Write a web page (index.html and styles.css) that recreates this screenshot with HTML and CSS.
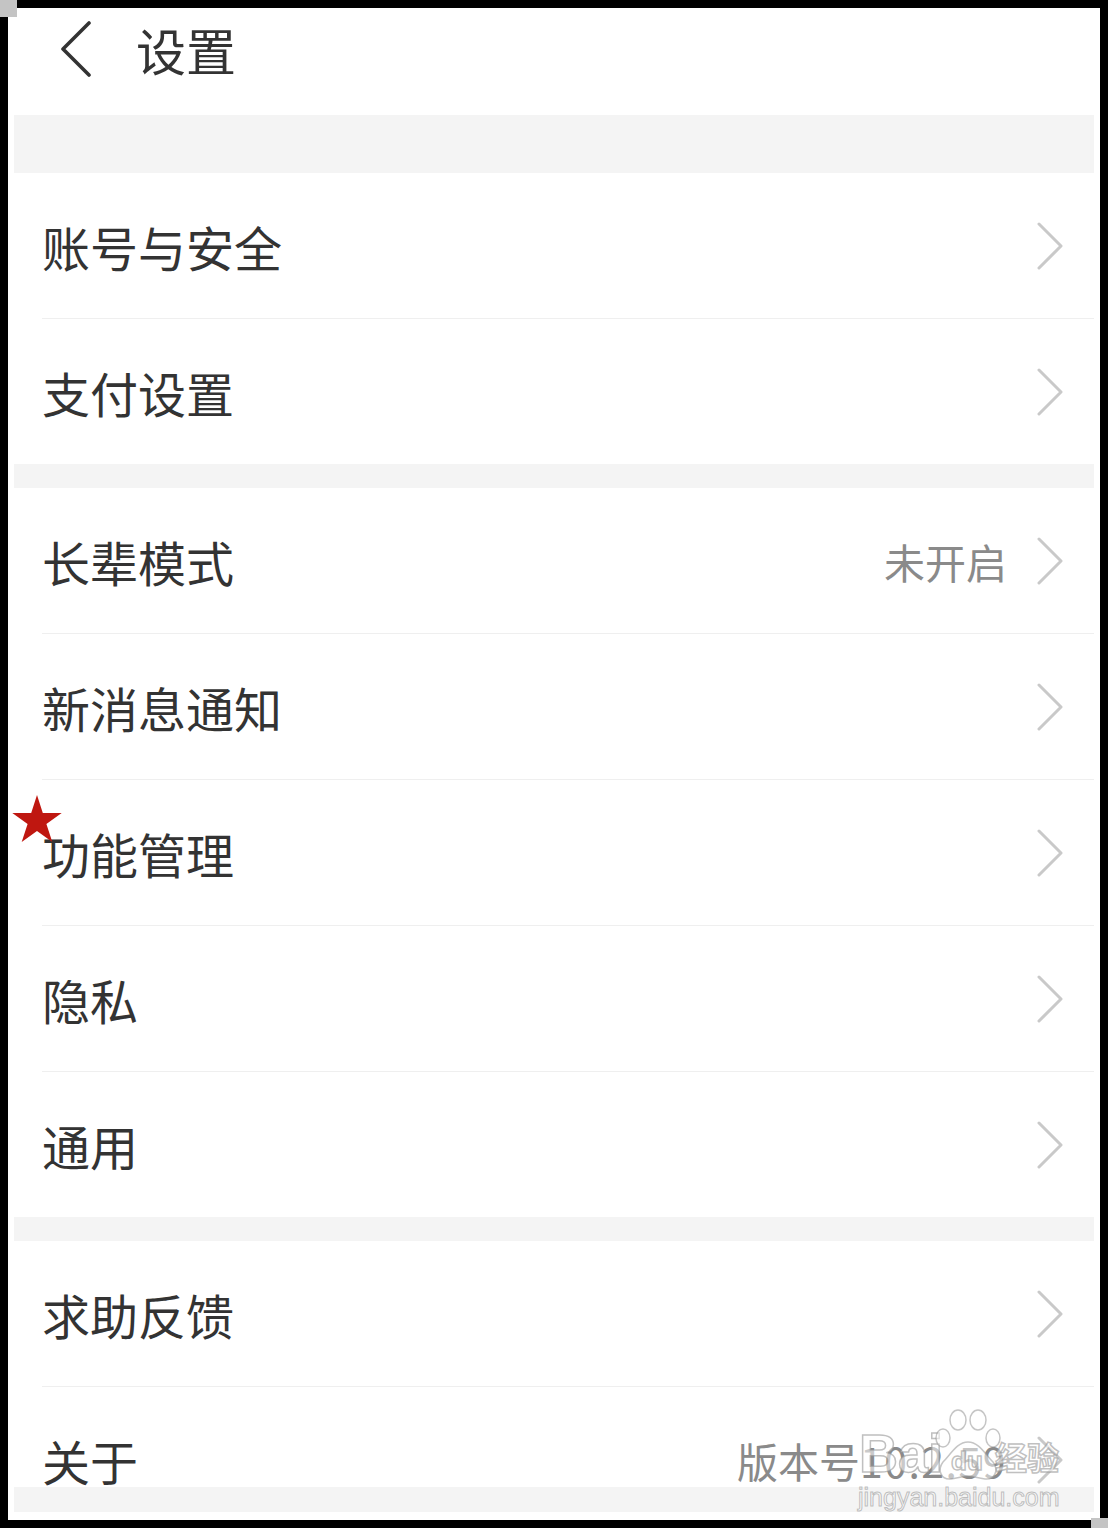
FILE: index.html
```html
<!DOCTYPE html>
<html lang="zh-CN">
<head>
    <meta charset="UTF-8">
    <meta name="viewport" content="width=device-width, initial-scale=1.0">
    <title>设置</title>
    <link rel="stylesheet" href="styles.css">
</head>
<body>
    <div class="frame">
        <span class="corner corner-tl"></span>
        <span class="corner corner-br"></span>

        <div class="screen">
            <header class="topbar">
                <svg class="back" width="36" height="56" viewBox="0 0 36 56">
                    <path d="M31 2 L5 28 L31 54" fill="none" stroke="#333" stroke-width="3.6" stroke-linecap="round" stroke-linejoin="round"/>
                </svg>
                <h1 class="title">设置</h1>
            </header>

            <div class="band band-top"></div>

            <ul class="group">
                <li class="item"><span class="label">账号与安全</span><span class="arrow"></span></li>
                <li class="item"><span class="label">支付设置</span><span class="arrow"></span></li>
            </ul>

            <div class="band"></div>

            <ul class="group">
                <li class="item"><span class="label">长辈模式</span><span class="value">未开启</span><span class="arrow"></span></li>
                <li class="item"><span class="label">新消息通知</span><span class="arrow"></span></li>
                <li class="item">
                    <svg class="star" width="50" height="50" viewBox="0 0 50 50">
                        <polygon points="25,1 30.8,19 49.7,19 34.4,30.1 40.3,48 25,36.9 9.7,48 15.6,30.1 0.3,19 19.2,19" fill="#bf1710"/>
                    </svg>
                    <span class="label">功能管理</span><span class="arrow"></span>
                </li>
                <li class="item"><span class="label">隐私</span><span class="arrow"></span></li>
                <li class="item"><span class="label">通用</span><span class="arrow"></span></li>
            </ul>

            <div class="band"></div>

            <ul class="group">
                <li class="item"><span class="label">求助反馈</span><span class="arrow"></span></li>
                <li class="item item-cut"><span class="label">关于</span><span class="value">版本号<span class="num">10.2.59</span></span><span class="arrow"></span></li>
            </ul>

            <div class="band band-bottom"></div>
        </div>

        <div class="watermark">
            <div class="wm-logo">
                <span class="wm-bai">Bai</span>
                <span class="wm-paw">
                    <svg width="70" height="74" viewBox="0 0 70 74">
                        <g fill="rgba(255,255,255,0.5)" stroke="rgba(150,150,150,0.55)" stroke-width="1.5">
                            <ellipse cx="10" cy="30" rx="7" ry="9"/>
                            <ellipse cx="25" cy="12" rx="8" ry="10"/>
                            <ellipse cx="45" cy="12" rx="8" ry="10"/>
                            <ellipse cx="60" cy="30" rx="7" ry="9"/>
                            <path d="M35 34 C24 34 18 46 10 54 C4 62 8 72 18 71 C26 70 30 68 35 68 C40 68 44 70 52 71 C62 72 66 62 60 54 C52 46 46 34 35 34 Z"/>
                        </g>
                    </svg>
                    <span class="wm-du">du</span>
                </span>
                <span class="wm-jy">经验</span>
            </div>
            <div class="wm-url">jingyan.baidu.com</div>
        </div>
    </div>
</body>
</html>
```

FILE: styles.css
```css
* {
    box-sizing: border-box;
}

body {
    margin: 0;
    padding-top: 8px;
    background: #000;
    height: 1528px;
    font-family: "Noto Sans CJK SC", "Noto Sans", sans-serif;
    color: #333;
}

.frame {
    position: relative;
    margin: 0 8px;
    width: 1092px;
    height: 1512px;
    background: #fff;
}

.corner {
    position: absolute;
    background: #c4c4c4;
}

.corner-tl {
    left: -8px;
    top: -8px;
    width: 17px;
    height: 17px;
}

.corner-br {
    right: -8px;
    bottom: -8px;
    width: 17px;
    height: 10px;
}

.screen {
    padding: 0 6px;
}

.topbar {
    height: 107px;
    display: flex;
    align-items: center;
    padding: 0 0 26px 44px;
}

.back {
    display: block;
}

.title {
    margin: 0 0 0 42px;
    font-size: 50px;
    font-weight: 400;
    line-height: 50px;
    color: #333;
}

.band {
    height: 24px;
    background: #f4f4f4;
}

.band-top {
    height: 58px;
}

.band-bottom {
    height: 25px;
}

.group {
    list-style: none;
    margin: 0;
    padding: 0;
}

.item {
    position: relative;
    height: 146px;
    margin-left: 28px;
    padding-right: 30px;
    display: flex;
    align-items: center;
    border-bottom: 1px solid #efefef;
}

.item:last-child {
    height: 145px;
    border-bottom: none;
}

.item-cut,
.item-cut:last-child {
    height: 100px;
    align-items: flex-start;
    padding-top: 49px;
}

.label {
    flex: 1;
    font-size: 48px;
    line-height: 48px;
    color: #333;
}

.value {
    margin-right: 29px;
    font-size: 41px;
    line-height: 48px;
    color: #8a8a8a;
}

.num {
    letter-spacing: 1.5px;
}

.arrow {
    display: block;
    width: 28px;
    height: 48px;
    background: url("data:image/svg+xml,%3Csvg xmlns='http://www.w3.org/2000/svg' width='28' height='48' viewBox='0 0 28 48'%3E%3Cpath d='M3 2 L25 24 L3 46' fill='none' stroke='%23c9c9c9' stroke-width='3' stroke-linecap='round' stroke-linejoin='round'/%3E%3C/svg%3E") no-repeat center;
}

.star {
    position: absolute;
    left: -30px;
    top: 14px;
}

/* watermark over the last row */
.watermark {
    position: absolute;
    left: 843px;
    top: 1394px;
    width: 215px;
    font-family: "Liberation Sans", Arial, sans-serif;
    color: rgba(255, 255, 255, 0.55);
    -webkit-text-stroke: 1.5px rgba(150, 150, 150, 0.6);
    pointer-events: none;
}

.wm-logo {
    display: flex;
    align-items: flex-end;
    height: 80px;
}

.wm-bai {
    font-size: 54px;
    font-weight: 700;
    line-height: 54px;
    margin-left: 8px;
    margin-bottom: 2px;
}

.wm-paw {
    position: relative;
    width: 62px;
    height: 74px;
    margin-left: -6px;
}

.wm-paw svg {
    position: absolute;
    left: -4px;
    top: 0;
}

.wm-du {
    position: absolute;
    left: 14px;
    top: 40px;
    font-size: 26px;
    line-height: 26px;
    font-weight: 700;
}

.wm-jy {
    font-family: "Noto Sans CJK SC", sans-serif;
    font-size: 32px;
    font-weight: 700;
    line-height: 32px;
    margin-left: -4px;
    margin-bottom: 10px;
}

.wm-url {
    font-size: 25px;
    line-height: 26px;
    margin-left: 7px;
    margin-top: 2px;
    -webkit-text-stroke: 1px rgba(150, 150, 150, 0.6);
}
```
